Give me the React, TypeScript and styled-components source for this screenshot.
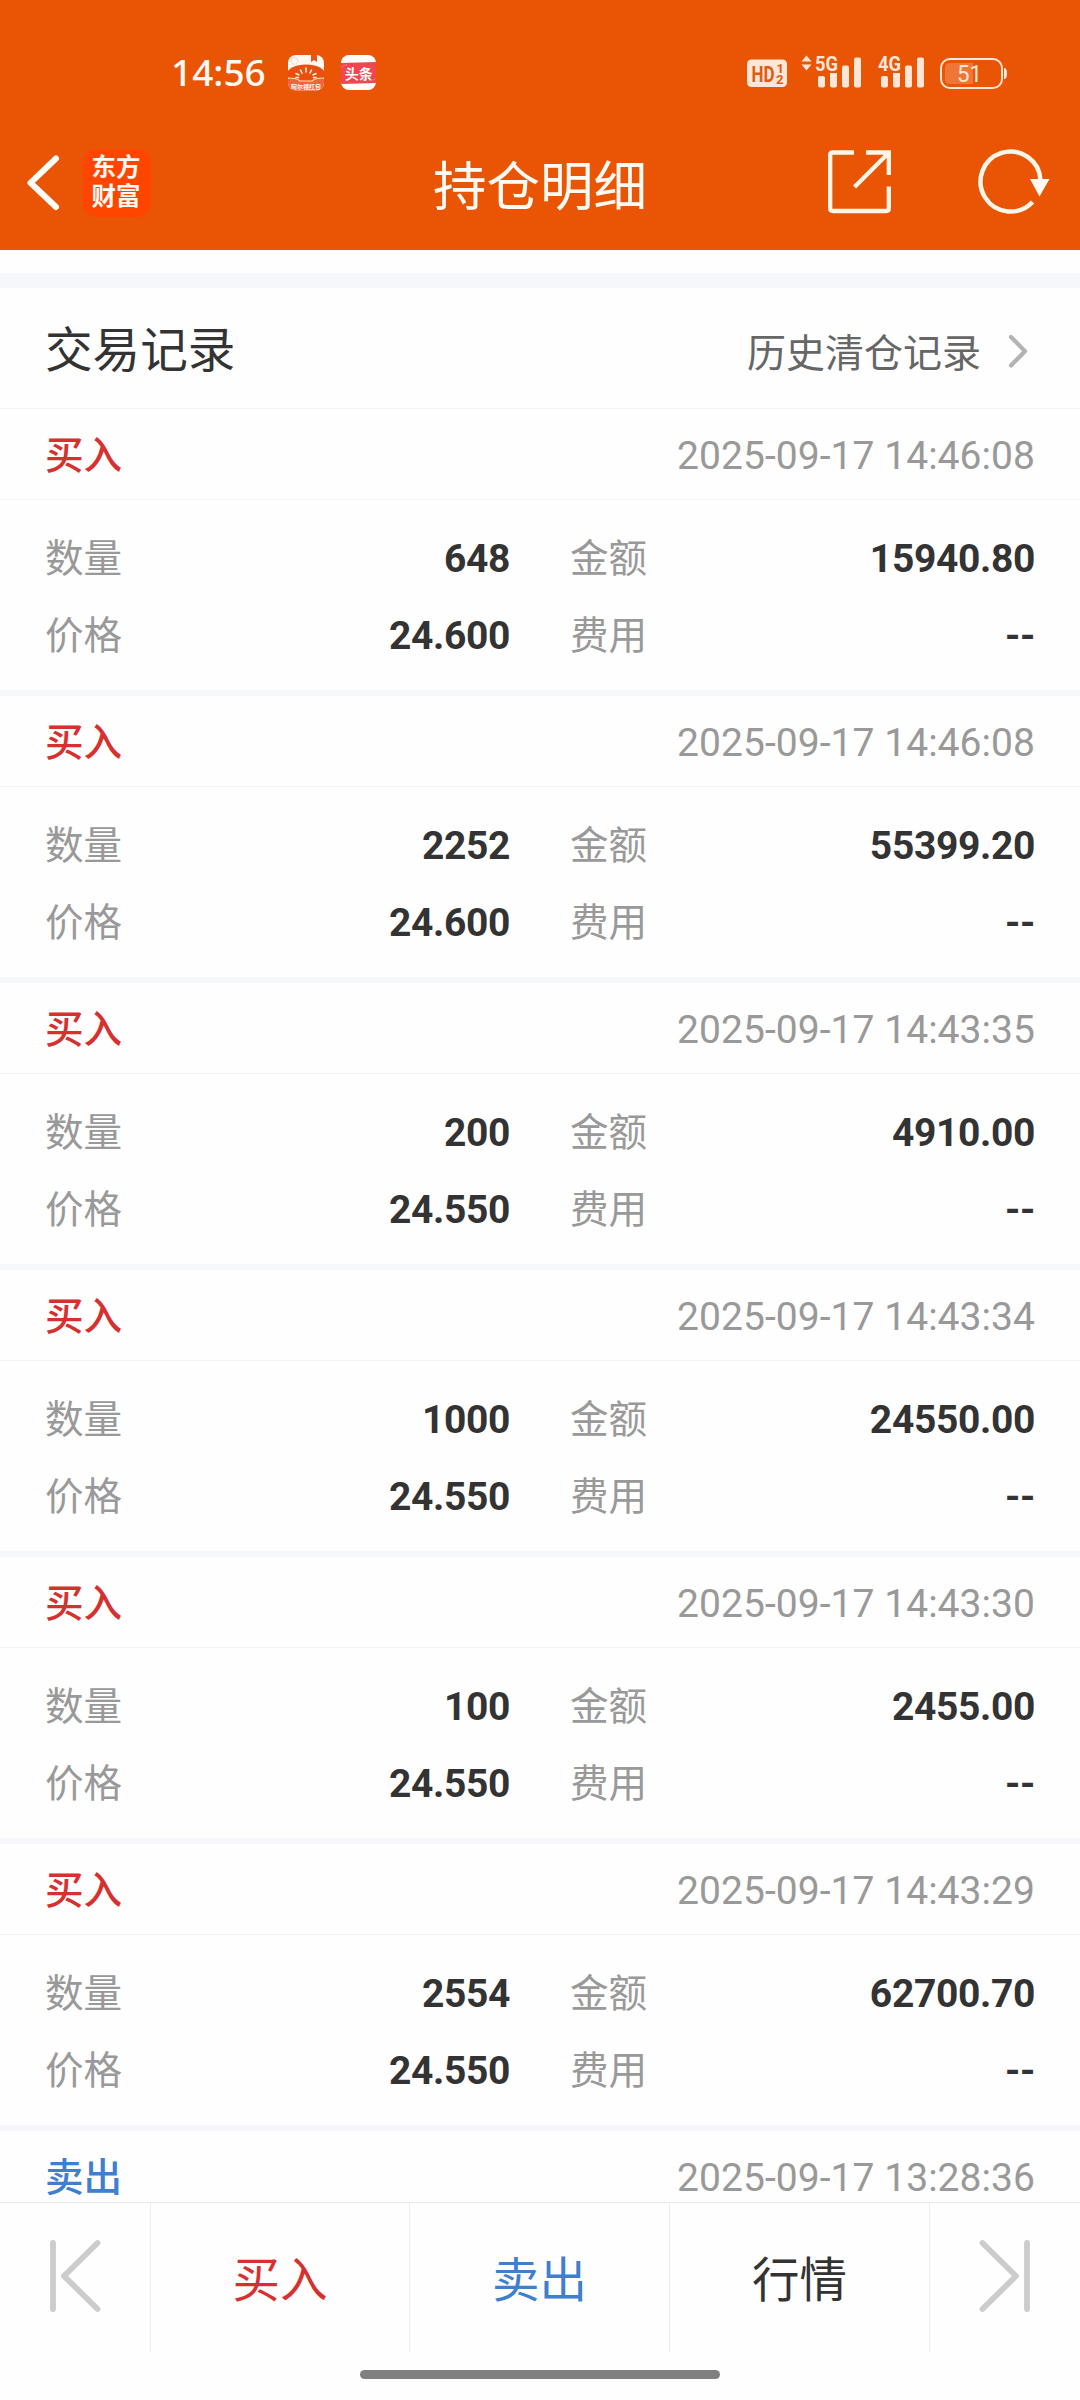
import React from "react";
import styled, { createGlobalStyle } from "styled-components";

const BUY = "#d6302f";
const SELL = "#3f7fce";

const GlobalStyle = createGlobalStyle`
  html, body { margin: 0; padding: 0; background: #fefefe; }
  * { box-sizing: border-box; }
  body { font-family: Roboto, "Noto Sans CJK SC", sans-serif; color: #333; }
  svg { display: block; flex: none; overflow: visible; }
`;

const Screen = styled.div`
  width: 1080px;
  height: 2400px;
  display: flex;
  flex-direction: column;
  overflow: hidden;
  background: #fefefe;
`;

const Header = styled.header`
  height: 250px;
  flex: none;
  background: #e95504;
  color: #fffaf3;
`;

const StatusBar = styled.div`
  height: 110px;
  padding: 35px 73px 0 171px;
  display: flex;
  align-items: center;
`;

const Clock = styled.span`
  width: 117px;
  padding-bottom: 1px;
  font: 500 37px/40px "Noto Sans", sans-serif;
  letter-spacing: 0;
`;

const AppIcons = styled.div`
  display: flex;
  gap: 17px;
  flex: 1;
`;

const StatusIcons = styled.div`
  display: flex;
  align-items: center;
`;

const NavBar = styled.div`
  height: 140px;
  display: grid;
  grid-template-columns: 360px 360px 360px;
`;

const NavLeft = styled.div`
  display: flex;
  align-items: center;
  gap: 24px;
  padding: 5px 0 0 25px;
`;

const BrandLogo = styled.div`
  width: 68px;
  height: 68px;
  border-radius: 14px;
  background: #ff4500;
  display: flex;
  flex-direction: column;
  align-items: center;
  justify-content: center;
  font: 700 24.5px/29.5px "Noto Sans CJK SC", sans-serif;
  padding: 0 2px 5px 0;
`;

const Title = styled.h1`
  margin: 0;
  padding-top: 16px;
  font-size: 53.5px;
  font-weight: 400;
  line-height: 123px;
  text-align: center;
  white-space: nowrap;
`;

const NavRight = styled.div`
  display: flex;
  align-items: center;
  justify-content: flex-end;
  gap: 86px;
  padding: 4px 28px 0 0;
`;

const Content = styled.main`
  flex: none;
  height: 1952px;
  overflow: hidden;
  padding-top: 23px;
`;

const Band = styled.div`
  height: 15px;
  background: #f5f7fa;
`;

const SectionHead = styled.div`
  height: 121px;
  padding: 6px 52px 0 45px;
  border-bottom: 1px solid #f3f3f3;
  display: flex;
  align-items: center;
  justify-content: space-between;
`;

const SectionTitle = styled.h2`
  margin: 0;
  font-size: 47.6px;
  font-weight: 400;
  line-height: 60px;
`;

const HistoryLink = styled.div`
  display: flex;
  align-items: flex-start;
  gap: 27px;
  padding-top: 5px;
  color: #666;
  font-size: 39px;
  line-height: 50px;
`;

const ChevronBox = styled.span`
  padding-top: 5px;
`;

const Record = styled.section`
  height: 287px;
  border-bottom: 6px solid #f5f7fa;
`;

const RecordHead = styled.div`
  height: 91px;
  padding: 3px 45px 0;
  border-bottom: 1px solid #f3f3f3;
  display: flex;
  align-items: center;
  justify-content: space-between;
  font-size: 39px;
  line-height: 50px;
`;

const Side = styled.span<{ $sell?: boolean }>`
  padding-top: 1px;
  font-size: 38.6px;
  font-weight: 500;
  color: ${(p) => (p.$sell ? SELL : BUY)};
`;

const Time = styled.time`
  color: #999;
  letter-spacing: 0.05px;
`;

const Fields = styled.div`
  padding: 20px 45px 0;
  display: grid;
  grid-template-columns: 465px 465px;
  column-gap: 60px;
  grid-auto-rows: 77px;
`;

const Field = styled.div`
  display: flex;
  align-items: center;
  justify-content: space-between;
  font-size: 39px;
  line-height: 50px;
`;

const Label = styled.span`
  padding-top: 1px;
  font-size: 38.6px;
  color: #999;
`;

const Value = styled.span`
  font-weight: 700;
  letter-spacing: -0.35px;
`;

const TabBar = styled.nav`
  height: 150px;
  flex: none;
  border-top: 1px solid #e8e8e8;
  display: grid;
  grid-template-columns: 151px 259px 260px 260px 150px;
`;

const Tab = styled.div<{ $color?: string }>`
  display: flex;
  align-items: center;
  justify-content: center;
  padding-top: 6px;
  font-size: 47.5px;
  line-height: 60px;
  color: ${(p) => p.$color || "#333"};
  border-right: 1px solid #ececec;
  &:last-child { border-right: 0; }
`;

const StepTab = styled(Tab)`
  padding: 0 0 4px;
`;

const HomeArea = styled.div`
  flex: 1;
  display: flex;
  justify-content: center;
  padding-top: 18px;
`;

const HomeIndicator = styled.div`
  width: 360px;
  height: 9px;
  border-radius: 5px;
  background: #808080;
`;

const CREAM = "#ffe6d6";

const BurstIcon = () => (
  <svg width="36" height="36" viewBox="0 0 36 36">
    <defs>
      <clipPath id="burst"><rect width="36" height="35.5" rx="8" /></clipPath>
    </defs>
    <g clipPath="url(#burst)">
      <rect width="36" height="36" fill="#fff9f2" />
      <circle cx="6.5" cy="6" r="3.4" fill="none" stroke="#f3b49a" strokeWidth="1" strokeDasharray="1.2 1.2" />
      <path d="M23 0h6v7l-3-2-3 2z" fill="#e8541a" />
      <ellipse cx="18" cy="19" rx="19" ry="9.5" fill="#e9500f" />
      <path d="M0 24q9-1 12 2h12q3-3 12-2v12H0z" fill="#f2643e" />
      <path d="M0 23q9 0 12 3h12q3-3 12-3" fill="none" stroke="#ffe0b0" strokeWidth="1.2" />
      <path d="M18 13v4M12.500 15l1.500 3M23.500 15l-1.500 3M8 18.500l3 1.500M28 18.500l-3 1.500M8 22.500h2.500M25.500 22.500h2.500" stroke="#fff2d8" strokeWidth="1.6" strokeLinecap="round" />
      <text x="18" y="33.500" textAnchor="middle" fontSize="6" fontWeight="700" fill="#fff" fontFamily="Noto Sans CJK SC">阿尔领红包</text>
    </g>
  </svg>
);

const ToutiaoIcon = () => (
  <svg width="36" height="36" viewBox="0 0 36 36">
    <defs>
      <clipPath id="toutiao"><rect width="35" height="35" rx="8" /></clipPath>
    </defs>
    <g clipPath="url(#toutiao)">
      <rect width="36" height="36" fill="#fffdfb" />
      <path d="M0 8l36-1v21l-36 1z" fill="#f2454f" />
      <path d="M1 13a4 3 0 0 1 5-3M30 25a4 3 0 0 0 5-2" stroke="#ff9a92" strokeWidth="1" strokeDasharray="1.5 1" fill="none" />
      <text x="17.800" y="23.500" textAnchor="middle" fontSize="14" fontWeight="700" fill="#fff" fontFamily="Noto Sans CJK SC">头条</text>
    </g>
  </svg>
);

const HdIcon = () => (
  <svg width="54" height="36" viewBox="0 0 54 36">
    <rect x="0" y="4.500" width="40" height="27.500" rx="4.500" fill={CREAM} />
    <g fill="#e05a12" fontFamily="Roboto" fontWeight="700">
      <text x="4.500" y="26.500" fontSize="22.500" textLength="23" lengthAdjust="spacingAndGlyphs">HD</text>
      <text x="29.500" y="17.500" fontSize="13">1</text>
      <text x="29" y="29" fontSize="13">2</text>
    </g>
  </svg>
);

const SignalIcon = ({ label, data }: { label: string; data?: boolean }) => {
  const x0 = data ? 17 : 3;
  return (
    <svg width={data ? 77 : 62} height="36" viewBox={`0 0 ${data ? 77 : 62} 36`} fill={CREAM}>
      {data && <path d="M5.500 .5l5 6h-10zM5.500 15.500l5-6h-10z" />}
      <text x={x0 - 3} y="15.500" fontSize="20.500" fontWeight="700" fontFamily="Roboto" textLength="23" lengthAdjust="spacingAndGlyphs">{label}</text>
      <rect x={x0} y="21" width="7" height="11.500" rx="2" />
      <path d={`M${x0 + 12} 18h7v12.500q0 2-2 2h-3q-2 0-2-2z`} />
      <rect x={x0 + 24} y="10.500" width="7" height="22" rx="2" />
      <rect x={x0 + 36} y="2.500" width="7" height="30" rx="2" />
    </svg>
  );
};

const BatteryIcon = () => (
  <svg width="67" height="36" viewBox="0 0 67 36">
    <rect x="1" y="4" width="61" height="29" rx="9" fill="none" stroke={CREAM} strokeWidth="2" />
    <path d="M10 8h23v21H10q-5 0-5-5V13q0-5 5-5z" fill="#ee7637" />
    <path d="M64 13q3 0 3 5.500t-3 5.500z" fill={CREAM} />
    <text x="29.500" y="27" textAnchor="middle" fontSize="24" fill={CREAM} fontFamily="Roboto" textLength="25" lengthAdjust="spacingAndGlyphs">51</text>
  </svg>
);

const BackIcon = () => (
  <svg width="34" height="56" viewBox="0 0 34 56">
    <path d="M31 3.500L5.500 27.800L31 52" fill="none" stroke="#fffdf9" strokeWidth="6" strokeLinecap="round" strokeLinejoin="round" />
  </svg>
);

const ShareIcon = () => (
  <svg width="64" height="64" viewBox="0 0 64 64">
    <g fill="none" stroke="#fff6ea" strokeWidth="4.300">
      <path d="M26 2.500H5Q2.200 2.500 2.200 5V58.500Q2.200 61 5 61H58Q60.800 61 60.800 58.500V36.500" />
      <path d="M38 2.500H60.800V25" />
      <path d="M60 3.500L26.500 37" />
    </g>
  </svg>
);

const RefreshIcon = () => (
  <svg width="74" height="66" viewBox="0 0 74 66">
    <path d="M62.500 31A30 30 0 1 0 54.500 53" fill="none" stroke="#fff6ea" strokeWidth="4.500" strokeLinecap="butt" />
    <path d="M52 30H71.500L61.500 47.500z" fill="#fffaf3" />
  </svg>
);

const ChevronRight = () => (
  <svg width="20" height="36" viewBox="0 0 20 36">
    <path d="M3 3L17 17.200L3 31.500" fill="none" stroke="#b3b3b3" strokeWidth="4.200" strokeLinecap="round" strokeLinejoin="round" />
  </svg>
);

const StepIcon = ({ flip }: { flip?: boolean }) => (
  <svg width="50" height="72" viewBox="0 0 50 72">
    <path
      d={flip ? "M47 3V69M2.500 3L36 36L2.500 69" : "M3 3V69M47.500 3L14 36L47.500 69"}
      fill="none" stroke="#ccc" strokeWidth="5.800" strokeLinecap="round" strokeLinejoin="round"
    />
  </svg>
);

interface Trade {
  sell?: boolean;
  time: string;
  qty: string;
  amount: string;
  price: string;
}

const trades: Trade[] = [
  { time: "2025-09-17 14:46:08", qty: "648", amount: "15940.80", price: "24.600" },
  { time: "2025-09-17 14:46:08", qty: "2252", amount: "55399.20", price: "24.600" },
  { time: "2025-09-17 14:43:35", qty: "200", amount: "4910.00", price: "24.550" },
  { time: "2025-09-17 14:43:34", qty: "1000", amount: "24550.00", price: "24.550" },
  { time: "2025-09-17 14:43:30", qty: "100", amount: "2455.00", price: "24.550" },
  { time: "2025-09-17 14:43:29", qty: "2554", amount: "62700.70", price: "24.550" },
];

const TradeHead = ({ sell, time }: { sell?: boolean; time: string }) => (
  <RecordHead>
    <Side $sell={sell}>{sell ? "卖出" : "买入"}</Side>
    <Time>{time}</Time>
  </RecordHead>
);

const TradeRecord = ({ trade }: { trade: Trade }) => (
  <Record>
    <TradeHead sell={trade.sell} time={trade.time} />
    <Fields>
      <Field><Label>数量</Label><Value>{trade.qty}</Value></Field>
      <Field><Label>金额</Label><Value>{trade.amount}</Value></Field>
      <Field><Label>价格</Label><Value>{trade.price}</Value></Field>
      <Field><Label>费用</Label><Value>--</Value></Field>
    </Fields>
  </Record>
);

export default function App() {
  return (
    <Screen>
      <GlobalStyle />
      <Header>
        <StatusBar>
          <Clock>14:56</Clock>
          <AppIcons>
            <BurstIcon />
            <ToutiaoIcon />
          </AppIcons>
          <StatusIcons>
            <HdIcon />
            <SignalIcon label="5G" data />
            <SignalIcon label="4G" />
            <BatteryIcon />
          </StatusIcons>
        </StatusBar>
        <NavBar>
          <NavLeft>
            <BackIcon />
            <BrandLogo>
              <span>东方</span>
              <span>财富</span>
            </BrandLogo>
          </NavLeft>
          <Title>持仓明细</Title>
          <NavRight>
            <ShareIcon />
            <RefreshIcon />
          </NavRight>
        </NavBar>
      </Header>
      <Content>
        <Band />
        <SectionHead>
          <SectionTitle>交易记录</SectionTitle>
          <HistoryLink>
            历史清仓记录
            <ChevronBox><ChevronRight /></ChevronBox>
          </HistoryLink>
        </SectionHead>
        {trades.map((trade, i) => (
          <TradeRecord key={i} trade={trade} />
        ))}
        <TradeHead sell time="2025-09-17 13:28:36" />
      </Content>
      <TabBar>
        <StepTab><StepIcon /></StepTab>
        <Tab $color={BUY}>买入</Tab>
        <Tab $color={SELL}>卖出</Tab>
        <Tab>行情</Tab>
        <StepTab><StepIcon flip /></StepTab>
      </TabBar>
      <HomeArea>
        <HomeIndicator />
      </HomeArea>
    </Screen>
  );
}
